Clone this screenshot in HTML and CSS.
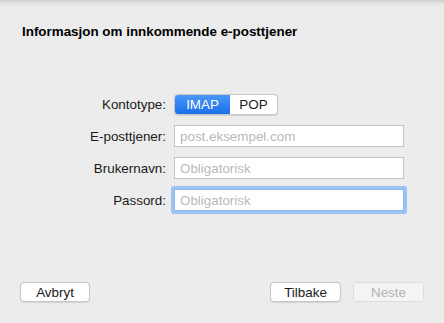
FILE: index.html
```html
<!DOCTYPE html>
<html lang="no">
<head>
<meta charset="utf-8">
<link rel="stylesheet" href="styles.css">
</head>
<body>
<div class="window">
  <div class="shade"></div>
  <h1 class="title">Informasjon om innkommende e-posttjener</h1>
  <div class="form">
    <label class="label">Kontotype:</label>
    <div class="segmented">
      <span class="seg seg-on">IMAP</span>
      <span class="seg">POP</span>
    </div>
    <label class="label">E-posttjener:</label>
    <input class="field" type="text" placeholder="post.eksempel.com">
    <label class="label">Brukernavn:</label>
    <input class="field" type="text" placeholder="Obligatorisk">
    <label class="label">Passord:</label>
    <input class="field field-focus" type="password" placeholder="Obligatorisk">
  </div>
  <div class="footer">
    <button class="btn btn-cancel">Avbryt</button>
    <div class="spacer"></div>
    <button class="btn btn-back">Tilbake</button>
    <button class="btn btn-next" disabled>Neste</button>
  </div>
</div>
</body>
</html>
```
FILE: styles.css
```css
* { box-sizing: border-box; }
html, body { margin: 0; padding: 0; }
body {
  background: #ececec;
  font-family: "Liberation Sans", Arial, sans-serif;
  font-size: 13.4px;
  color: #1a1a1a;
}
.window {
  width: 444px;
  height: 323px;
  display: flex;
  flex-direction: column;
}
.shade {
  height: 7px;
  background: linear-gradient(to bottom, #cfcfcf 0%, #e2e2e2 45%, #ececec 100%);
}
.title {
  margin: 17px 0 0 22px;
  font-size: 13.4px;
  line-height: 15px;
  font-weight: bold;
  color: #000;
}
.form {
  margin-top: 55px;
  display: grid;
  grid-template-columns: 166px 230px;
  column-gap: 8px;
  row-gap: 10px;
  align-items: center;
}
.label {
  text-align: right;
  color: #1a1a1a;
  line-height: 15px;
}
.segmented {
  display: flex;
  width: 104px;
  height: 21px;
  border: 1px solid #c8c8c8;
  border-radius: 4px;
  background: #fff;
  overflow: hidden;
  box-shadow: 0 0.5px 1px rgba(0,0,0,0.12);
}
.seg {
  flex: 1;
  display: flex;
  align-items: center;
  justify-content: center;
  color: #1a1a1a;
  font-size: 13.4px;
}
.seg-on {
  flex: 0 0 55px;
  background: linear-gradient(to bottom, #4a97f8 0%, #1b70ea 100%);
  color: #fff;
}
.field {
  width: 230px;
  height: 22px;
  border: 1px solid #c3c3c3;
  background: #fff;
  padding: 0 5px;
  font-family: "Liberation Sans", Arial, sans-serif;
  font-size: 13.4px;
  outline: none;
  margin: 0;
}
.field::placeholder { color: #b9b9b9; }
.field-focus {
  border-color: #8fb6ea;
  box-shadow: 0 0 0 3px #9cc3f6;
  border-radius: 1px;
}
.footer {
  margin-top: auto;
  display: flex;
  align-items: center;
  padding: 0 20px 21px 20px;
  gap: 12px;
}
.spacer { flex: 1; }
.btn {
  height: 20px;
  border: 1px solid #c6c6c6;
  border-radius: 4px;
  background: #fff;
  font-family: "Liberation Sans", Arial, sans-serif;
  font-size: 13.4px;
  color: #1a1a1a;
  padding: 0;
  box-shadow: 0 0.5px 1px rgba(0,0,0,0.1);
}
.btn-cancel { width: 70px; }
.btn-back { width: 71px; }
.btn-next {
  width: 71px;
  background: #f4f4f4;
  border-color: #dddddd;
  color: #b4b4b4;
  box-shadow: none;
}
```
